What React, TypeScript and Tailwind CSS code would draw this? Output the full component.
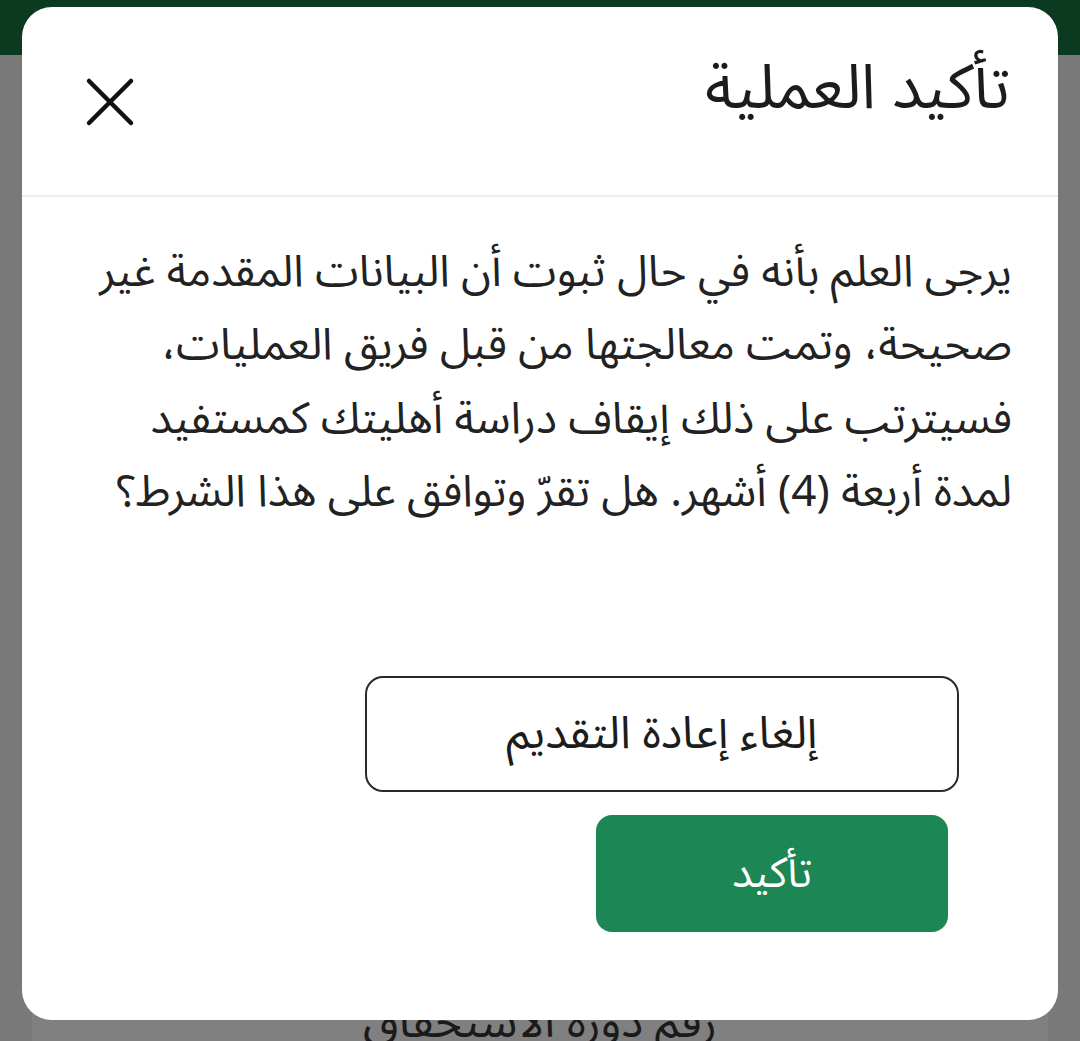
import React from "react";

const lines = [
  "يرجى العلم بأنه في حال ثبوت أن البيانات المقدمة غير",
  "صحيحة، وتمت معالجتها من قبل فريق العمليات،",
  "فسيترتب على ذلك إيقاف دراسة أهليتك كمستفيد",
  "لمدة أربعة (4) أشهر. هل تقرّ وتوافق على هذا الشرط؟",
];

export default function App() {
  const font = { fontFamily: '"Noto Sans Arabic", "Noto Sans", "DejaVu Sans", sans-serif' };
  return (
    <div className="relative w-[1080px] h-[1041px] overflow-hidden bg-[#797979]" style={font}>
      {/* background page */}
      <div className="h-[55px] bg-[#0c3a20]" />
      <div className="mx-[32px] mt-[930px] h-[60px] bg-[#808080] flex justify-center" dir="rtl">
        <span className="text-[46px] leading-[60px] text-[#1a1a1a] mt-[8px] whitespace-nowrap">رقم دورة الاستحقاق</span>
      </div>

      {/* modal */}
      <div className="absolute left-[22px] top-[7px] w-[1036px] h-[1013px] bg-white rounded-[30px] flex flex-col" dir="rtl">
        <div className="h-[190px] flex items-start justify-between pr-[48px] pl-[63px] pt-[44px] border-b-2 border-[#e9eeeb]">
          <h2 className="text-[62px] leading-[76px] text-[#1c1c1c] font-normal whitespace-nowrap">تأكيد العملية</h2>
          <svg width="50" height="50" viewBox="0 0 50 50" className="mt-[26px]">
            <path d="M4 4 L46 46 M46 4 L4 46" stroke="#111" strokeWidth="4.5" strokeLinecap="round" />
          </svg>
        </div>
        <div className="pr-[46px] pl-[40px] pt-[38px] flex flex-col">
          {lines.map((l) => (
            <div key={l} className="h-[73.5px] flex items-center text-[44px] leading-[60px] text-[#222] whitespace-nowrap">
              {l}
            </div>
          ))}
        </div>
        <div className="flex flex-col mt-[147px]">
          <button className="mr-[99px] w-[594px] h-[116px] border-2 border-[#2a2a2a] rounded-[18px] bg-white text-[45px] text-[#1c1c1c] whitespace-nowrap">
            إلغاء إعادة التقديم
          </button>
          <button className="mr-[110px] mt-[23px] w-[352px] h-[117px] rounded-[16px] bg-[#1c8754] text-[42px] text-white">
            تأكيد
          </button>
        </div>
      </div>
    </div>
  );
}
